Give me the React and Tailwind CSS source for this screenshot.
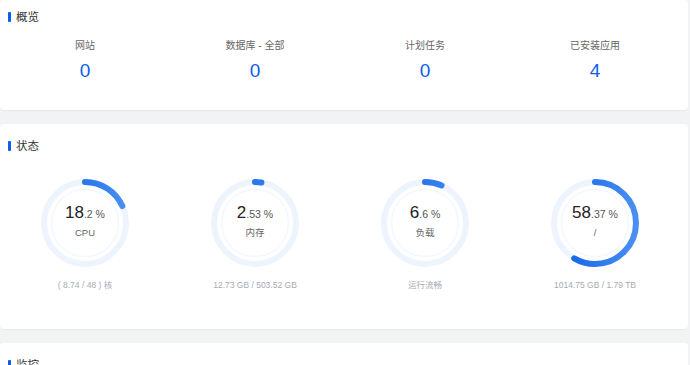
import React from 'react';

const overview = [
    { label: '网站', value: 0 },
    { label: '数据库 - 全部', value: 0 },
    { label: '计划任务', value: 0 },
    { label: '已安装应用', value: 4 },
];

const status = [
    { percent: 18.2, int: '18', dec: '.2', label: 'CPU', info: '( 8.74 / 48 ) 核' },
    { percent: 2.53, int: '2', dec: '.53', label: '内存', info: '12.73 GB / 503.52 GB' },
    { percent: 6.6, int: '6', dec: '.6', label: '负载', info: '运行流畅' },
    { percent: 58.37, int: '58', dec: '.37', label: '/', info: '1014.75 GB / 1.79 TB' },
];

const font = { fontFamily: '"Liberation Sans", "Noto Sans CJK SC", sans-serif' };

const Title = ({ children }) => (
    <div className="flex items-center h-[16px] pl-[8px]">
        <span className="w-[3px] h-[10px] rounded-[1px] bg-[#0a5eeb]" />
        <span className="ml-[5px] text-[11.5px] leading-[16px] text-[#333]">{children}</span>
    </div>
);

// ring like the gauge in the panel
const Ring = ({ percent, id }) => {
    const r = 41;
    const c = 2 * Math.PI * r;
    const len = (percent / 100) * c;
    return (
        <svg width="88" height="88" viewBox="0 0 88 88" className="absolute left-0 top-0">
            <defs>
                <linearGradient id={id} x1="0" y1="0" x2="0" y2="1">
                    <stop offset="0%" stopColor="#0a5ce6" />
                    <stop offset="100%" stopColor="#4a90f2" />
                </linearGradient>
            </defs>
            <circle cx="44" cy="44" r={r} fill="none" stroke="#eef4fd" strokeWidth="6" />
            <circle cx="44" cy="44" r="33.5" fill="none" stroke="#f3f7fe" strokeWidth="1.5" />
            <circle
                cx="44"
                cy="44"
                r={r}
                fill="none"
                stroke={`url(#${id})`}
                strokeWidth="6"
                strokeLinecap="round"
                strokeDasharray={`${Math.max(len, 0.01)} ${c}`}
                transform="rotate(-90 44 44)"
            />
        </svg>
    );
};

export default function App() {
    return (
        <div className="w-[690px] h-[365px] overflow-hidden bg-[#f2f3f5]" style={font}>
            {/* 概览 */}
            <div className="w-[688px] h-[110px] bg-white rounded-[4px] shadow-[0_1px_1px_rgba(0,0,0,0.04)] pt-[9px]">
                <Title>概览</Title>
                <div className="grid grid-cols-4 w-[680px] mt-[13px]">
                    {overview.map((item, i) => (
                        <div key={i} className="flex flex-col items-center">
                            <span className="text-[10px] leading-[16px] text-[#666]">{item.label}</span>
                            <span className="mt-[3px] text-[19px] leading-[28px] text-[#0a5eeb]">{item.value}</span>
                        </div>
                    ))}
                </div>
            </div>

            {/* 状态 */}
            <div className="mt-[14px] w-[688px] h-[205px] bg-white rounded-[4px] shadow-[0_1px_1px_rgba(0,0,0,0.04)] pt-[14px]">
                <Title>状态</Title>
                <div className="grid grid-cols-4 w-[680px] mt-[25px]">
                    {status.map((s, i) => (
                        <div key={i} className="flex flex-col items-center">
                            <div className="relative w-[88px] h-[88px]">
                                <Ring percent={s.percent} id={`g${i}`} />
                                <div className="absolute inset-0 flex flex-col items-center justify-center">
                                    <div className="mt-[-4px] leading-[22px] text-[#222]">
                                        <span className="text-[17px]">{s.int}</span>
                                        <span className="text-[10.5px] text-[#555]">{s.dec} %</span>
                                    </div>
                                    <span className="mt-[1px] text-[9.5px] leading-[14px] text-[#666]">{s.label}</span>
                                </div>
                            </div>
                            <span className="mt-[12px] text-[8.5px] leading-[12px] text-[#a6abb2]">{s.info}</span>
                        </div>
                    ))}
                </div>
            </div>

            {/* 监控 */}
            <div className="mt-[14px] w-[688px] h-[60px] bg-white rounded-[4px] pt-[14px]">
                <Title>监控</Title>
            </div>
        </div>
    );
}
